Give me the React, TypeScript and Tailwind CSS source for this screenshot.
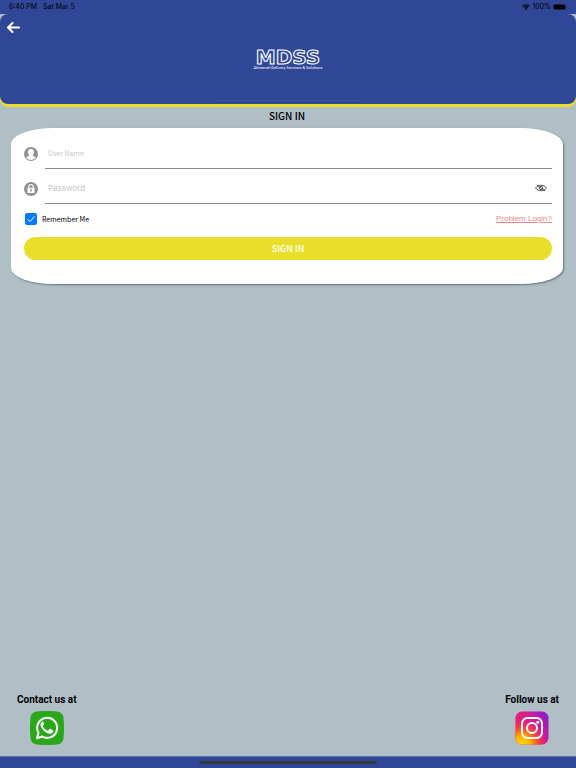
import React, { useState } from 'react';

interface FieldProps {
  id: string;
  label: string;
  type: string;
  icon: React.ReactNode;
  inputClass: string;
  children?: React.ReactNode;
}

const StatusBar: React.FC = () => (
  <div className="flex h-[14px] items-center justify-between bg-[#304797] px-[9px] font-['Inter',sans-serif] text-[7px] leading-[14px] text-black">
    <div className="flex gap-[6px]">
      <span>6:40 PM</span>
      <span>Sat Mar 5</span>
    </div>
    <div className="flex items-center gap-[2px]">
      <svg viewBox="0 0 16 12" className="h-[6px] w-2" aria-hidden="true">
        <path d="M1 4.5a10 10 0 0 1 14 0M3.8 7.3a6 6 0 0 1 8.4 0" fill="none" stroke="black" strokeWidth="2.2" />
        <path d="M5.6 9.2a3.5 3.5 0 0 1 4.8 0L8 12z" />
      </svg>
      <span>100%</span>
      <svg viewBox="0 0 28 12" className="h-[6px] w-[14px]" aria-hidden="true">
        <rect x="1" y="1" width="24" height="10" rx="3" />
        <path d="M26 4.2a2 2 0 0 1 0 3.6z" opacity=".6" />
      </svg>
    </div>
  </div>
);

const Logo: React.FC = () => (
  <svg viewBox="0 0 80 30" className="h-[30px] w-20" role="img" aria-label="MDSS">
    <text
      x="40"
      y="21"
      textAnchor="middle"
      fontFamily="DejaVu Sans, sans-serif"
      fontWeight="700"
      fontSize="20"
      fill="#304797"
      stroke="white"
      strokeWidth="1.1"
      strokeLinejoin="round"
    >
      MDSS
    </text>
    <text x="40" y="26" textAnchor="middle" fontFamily="Roboto, sans-serif" fontSize="4" fill="white">
      Almeerah Delivery Services &amp; Solutions
    </text>
  </svg>
);

const UserIcon: React.FC = () => (
  <svg viewBox="0 0 28 28" className="h-[14px] w-[14px]" aria-hidden="true">
    <circle cx="14" cy="14" r="14" fill="#919191" />
    <path
      d="M14 4c3.7 0 6 2.5 6 6 0 2.4-.9 4.5-2.3 5.8v1.6c3.3 1.2 5.7 2.3 6.3 3.8A12 12 0 0 1 14 26a12 12 0 0 1-10-4.8c.6-1.5 3-2.6 6.3-3.8v-1.6C8.9 14.5 8 12.4 8 10c0-3.5 2.3-6 6-6z"
      fill="white"
    />
  </svg>
);

const LockIcon: React.FC = () => (
  <svg viewBox="0 0 28 28" className="h-[14px] w-[14px]" aria-hidden="true">
    <circle cx="14" cy="14" r="14" fill="#919191" />
    <path d="M9.5 13V9.5a4.5 4.5 0 0 1 9 0V13" fill="none" stroke="white" strokeWidth="2.2" />
    <rect x="7" y="11.5" width="14" height="10.5" rx="1" fill="white" />
    <path d="M14 13.5v6" stroke="#919191" strokeWidth="2.6" />
  </svg>
);

const EyeOffIcon: React.FC = () => (
  <svg viewBox="0 0 24 16" className="h-2 w-3" fill="none" stroke="#222" strokeWidth="1.5" aria-hidden="true">
    <path d="M1 8C4 4 7.500 2.500 12 2.500S20 4 23 8c-3 4-6.500 5.500-11 5.500S4 12 1 8z" />
    <circle cx="12" cy="8" r="3.5" />
    <path d="M3.500 2l17 12" />
  </svg>
);

const WhatsappIcon: React.FC = () => (
  <svg viewBox="0 0 68 68" className="h-[34px] w-[34px]" aria-hidden="true">
    <path d="M34 0C59 0 68 5 68 34S59 68 34 68 0 63 0 34 9 0 34 0z" fill="#2aa81a" />
    <rect x="1" y="1" width="66" height="66" rx="13" fill="#2aa81a" />
    <path d="M14 54.5l3-11a20 20 0 1 1 7.5 7.5z" fill="none" stroke="white" strokeWidth="4" strokeLinejoin="round" />
    <path
      d="M27.5 23c-.8-1.6-1.5-1.6-2.6-1.5-2 .3-3.9 2.8-3.9 5.5 0 7.5 10.5 18.5 19 18.5 3 0 6-2 6.5-4.5.3-1.8.1-2.3-.8-2.7l-5.2-2.5c-.8-.4-1.4-.2-2 .6l-2 2.5c-.5.6-1 .7-1.9.3-3.8-1.6-6.8-4.2-8.8-8-.3-.7-.2-1.100.3-1.600l1.700-2.100c.4-.6.4-1 .1-1.600z"
      fill="white"
    />
  </svg>
);

const InstagramIcon: React.FC = () => (
  <svg viewBox="0 0 68 68" className="h-[34px] w-[34px]" aria-hidden="true">
    <defs>
      <linearGradient id="ig-base" x1="0" y1="0.6" x2="1" y2="0">
        <stop offset="0" stopColor="#f0255c" />
        <stop offset=".5" stopColor="#d81b92" />
        <stop offset="1" stopColor="#7a1fd0" />
      </linearGradient>
      <radialGradient id="ig-glow" cx=".2" cy="1" r=".75">
        <stop offset="0" stopColor="#ffdc00" />
        <stop offset=".35" stopColor="#ffb000" />
        <stop offset=".65" stopColor="#ff5a1f" stopOpacity=".8" />
        <stop offset="1" stopColor="#f0255c" stopOpacity="0" />
      </radialGradient>
    </defs>
    <rect x="1" y="1" width="66" height="66" rx="13" fill="url(#ig-base)" />
    <rect x="1" y="1" width="66" height="66" rx="13" fill="url(#ig-glow)" />
    <g fill="none" stroke="white" strokeWidth="4">
      <rect x="14" y="14" width="40" height="40" rx="11" />
      <circle cx="34" cy="34" r="10" />
    </g>
    <circle cx="45.5" cy="22.5" r="3" fill="white" />
  </svg>
);

const Field: React.FC<FieldProps> = ({ id, label, type, icon, inputClass, children }) => (
  <div className="flex h-[35px] items-center gap-[7px]">
    <label htmlFor={id} aria-label={label} className="shrink-0 pt-1">
      {icon}
    </label>
    <div className="flex h-full flex-1 items-center border-b border-[#888] pt-1 pr-[5px] pl-[3px]">
      <input
        id={id}
        type={type}
        placeholder={label}
        className={`min-w-0 flex-1 bg-transparent leading-[12px] text-black outline-none placeholder:text-[#c4c4c4] ${inputClass}`}
      />
      {children}
    </div>
  </div>
);

export default function App() {
  const [showPassword, setShowPassword] = useState(false);

  return (
    <div className="flex min-h-screen flex-col bg-[#b0bec5]">
      <StatusBar />

      {/* Header */}
      <header className="rounded-lg bg-[#304797] px-[7px] pt-[7px] pb-[3px] shadow-[0_3px_0_#e9df2b]">
        <button type="button" aria-label="Back" className="block h-3">
          <svg viewBox="0 0 26 22" className="h-[11px] w-[13px]" fill="none" stroke="white" strokeWidth="4" strokeLinecap="round" strokeLinejoin="round">
            <path d="M11 2L2 11l9 9M3 11h21" />
          </svg>
        </button>
        <div className="mx-auto flex w-[148px] justify-center border-b border-[#3d529d] pt-[10px] pb-[27px]">
          <Logo />
        </div>
      </header>

      {/* Sign in form */}
      <main className="flex-1 pr-[13px] pl-[11px]">
        <h1 className="py-1 text-center font-['Noto_Sans_CJK_SC',sans-serif] text-[10px] leading-[16px] font-medium text-black">
          SIGN IN
        </h1>
        <form
          className="rounded-[42px/16px] bg-white pt-[6px] pr-[11px] pb-6 pl-[13px] shadow-[1px_1px_2px_#66757d]"
          onSubmit={(e) => e.preventDefault()}
        >
          <Field
            id="username"
            label="User Name"
            type="text"
            icon={<UserIcon />}
            inputClass="font-['Noto_Sans_CJK_SC',sans-serif] text-[7px]"
          />
          <Field
            id="password"
            label="Password"
            type={showPassword ? 'text' : 'password'}
            icon={<LockIcon />}
            inputClass="font-['Inter',sans-serif] text-[8px]"
          >
            <button type="button" aria-label="Show password" onClick={() => setShowPassword(!showPassword)}>
              <EyeOffIcon />
            </button>
          </Field>

          <div className="flex h-[30px] items-center justify-between">
            <label className="flex items-center gap-[5px] font-['Noto_Sans_CJK_SC',sans-serif] text-[7px] leading-[12px] text-black">
              <span className="grid pl-px">
                <input
                  type="checkbox"
                  defaultChecked
                  className="peer col-start-1 row-start-1 h-3 w-3 appearance-none rounded-[2px] border border-[#007aff] checked:bg-[#007aff]"
                />
                <svg
                  viewBox="0 0 12 12"
                  className="pointer-events-none col-start-1 row-start-1 hidden h-3 w-3 peer-checked:block"
                  fill="none"
                  stroke="white"
                  strokeWidth="1"
                >
                  <path d="M2.5 6.5l2.5 2 4.5-5" />
                </svg>
              </span>
              Remember Me
            </label>
            <a href="#problem" className="font-['Liberation_Sans',sans-serif] text-[8px] leading-[12px] text-[#e88a8a] underline">
              Problem Login?
            </a>
          </div>

          <button
            type="submit"
            className="mt-[3px] block h-[23px] w-full rounded-full bg-[#e9df2b] text-center font-['Noto_Sans_CJK_SC',sans-serif] text-[9px] leading-[16px] font-medium text-white"
          >
            SIGN IN
          </button>
        </form>
      </main>

      {/* Contact links */}
      <div className="flex justify-between px-[17px] pb-[11px] font-['Roboto',sans-serif] text-[10px] leading-[12px] font-bold text-black">
        <a href="#whatsapp" className="flex flex-col items-center gap-[5px]">
          Contact us at
          <WhatsappIcon />
        </a>
        <a href="#instagram" className="flex flex-col items-center gap-[5px]">
          Follow us at
          <InstagramIcon />
        </a>
      </div>

      <footer className="flex h-3 items-center justify-center border-t border-[#5b6da9] bg-[#304797]">
        <div className="h-[3px] w-[31%] rounded-full bg-[#393939]" />
      </footer>
    </div>
  );
}
